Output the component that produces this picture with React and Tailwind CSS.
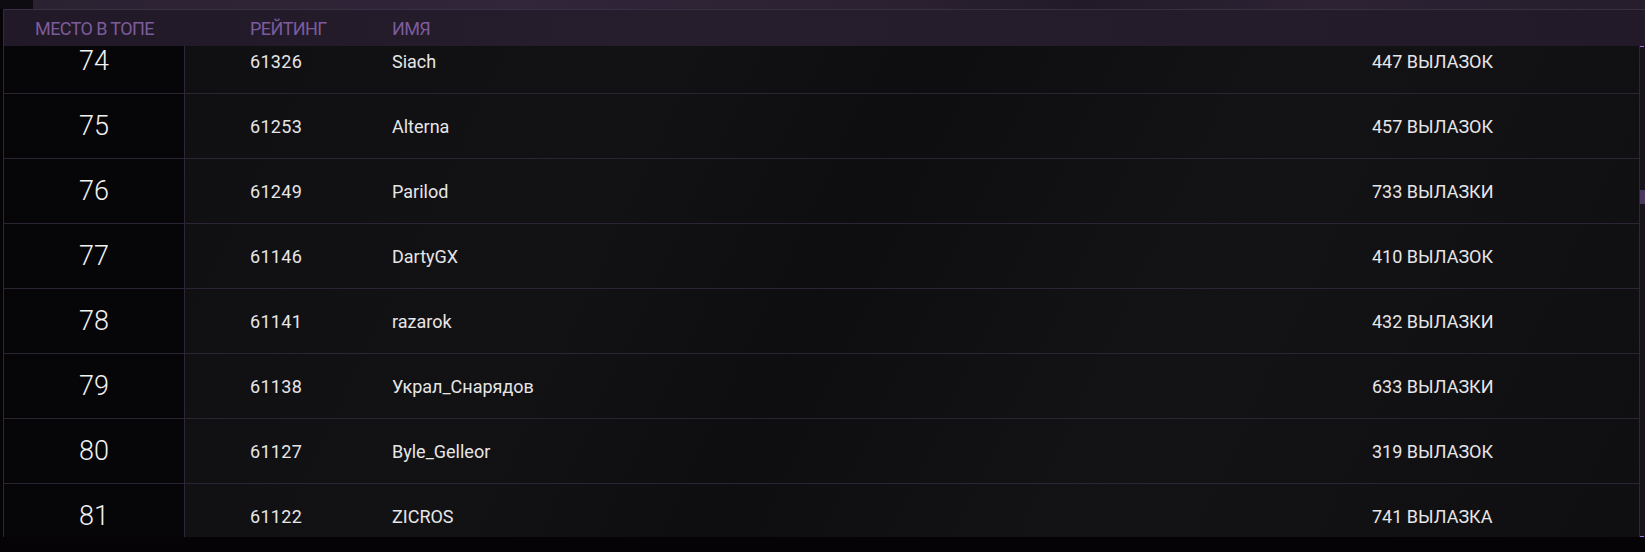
import React from "react";

const ROWS = [
  { place: 74, rating: 61326, name: "Siach", runs: "447 ВЫЛАЗОК" },
  { place: 75, rating: 61253, name: "Alterna", runs: "457 ВЫЛАЗОК" },
  { place: 76, rating: 61249, name: "Parilod", runs: "733 ВЫЛАЗКИ" },
  { place: 77, rating: 61146, name: "DartyGX", runs: "410 ВЫЛАЗОК" },
  { place: 78, rating: 61141, name: "razarok", runs: "432 ВЫЛАЗКИ" },
  { place: 79, rating: 61138, name: "Украл_Снарядов", runs: "633 ВЫЛАЗКИ" },
  { place: 80, rating: 61127, name: "Byle_Gelleor", runs: "319 ВЫЛАЗОК" },
  { place: 81, rating: 61122, name: "ZICROS", runs: "741 ВЫЛАЗКА" },
];

function Row({ row }) {
  return (
    <div className="flex h-[65px] items-center border-b border-[#2c2433]">
      <div className="flex h-full w-[181px] shrink-0 items-center justify-center border-r border-[#2f2637] bg-[#060507] text-[27px] font-light text-[#f2f2f2]">
        {row.place}
      </div>
      <div className="w-[207px] shrink-0 pl-[65px] text-[18px] tracking-[0.3px] text-[#e6e6e6]">
        {row.rating}
      </div>
      <div className="flex-1 text-[18px] text-[#e6e6e6]">{row.name}</div>
      <div className="w-[267px] shrink-0 text-[18px] text-[#e6e6e6]">{row.runs}</div>
    </div>
  );
}

export default function App() {
  return (
    <div className="flex h-[552px] w-[1645px] flex-col overflow-hidden bg-[#050306] font-['Roboto',sans-serif]">
      {/* top strip */}
      <div className="flex h-[9px] shrink-0">
        <div className="w-[33px] bg-[#0e0b11]" />
        <div className="flex-1 bg-[linear-gradient(90deg,#2a2131_0%,#31263a_30%,#2a2030_55%,#221a28_65%,#2c2234_80%,#251d2c_100%)]" />
      </div>

      <div className="ml-[3px] flex shrink-0 border-l border-[#342a3d]">
        <div className="flex h-[37px] flex-1 items-center border-t border-[#3a2f43] bg-[linear-gradient(90deg,#211927_0%,#261d2d_40%,#231a29_100%)] text-[18px] tracking-[-0.6px] text-[#7c5c9c]">
          <div className="w-[181px] shrink-0 text-center">МЕСТО В ТОПЕ</div>
          <div className="w-[207px] shrink-0 pl-[65px]">РЕЙТИНГ</div>
          <div className="flex-1">ИМЯ</div>
        </div>
      </div>

      <div className="ml-[3px] flex h-[491px] shrink-0">
        <div className="flex-1 overflow-hidden border-l border-r border-[#2f2637] bg-[linear-gradient(115deg,#0f0e11_0%,#121114_35%,#0e0d10_50%,#131215_70%,#0f0e11_100%)]">
          <div className="-mt-[17px]">
            {ROWS.map((r) => (
              <Row key={r.place} row={r} />
            ))}
          </div>
        </div>
        <div className="flex w-[5px] shrink-0 flex-col bg-[#17121c]">
          <div className="h-px w-[4px] bg-[#a472e0]" />
          <div className="h-[143px]" />
          <div className="h-[14px] bg-[#4a3861]" />
          <div className="flex-1" />
          <div className="h-px w-[4px] bg-[#a472e0]" />
        </div>
      </div>
    </div>
  );
}
